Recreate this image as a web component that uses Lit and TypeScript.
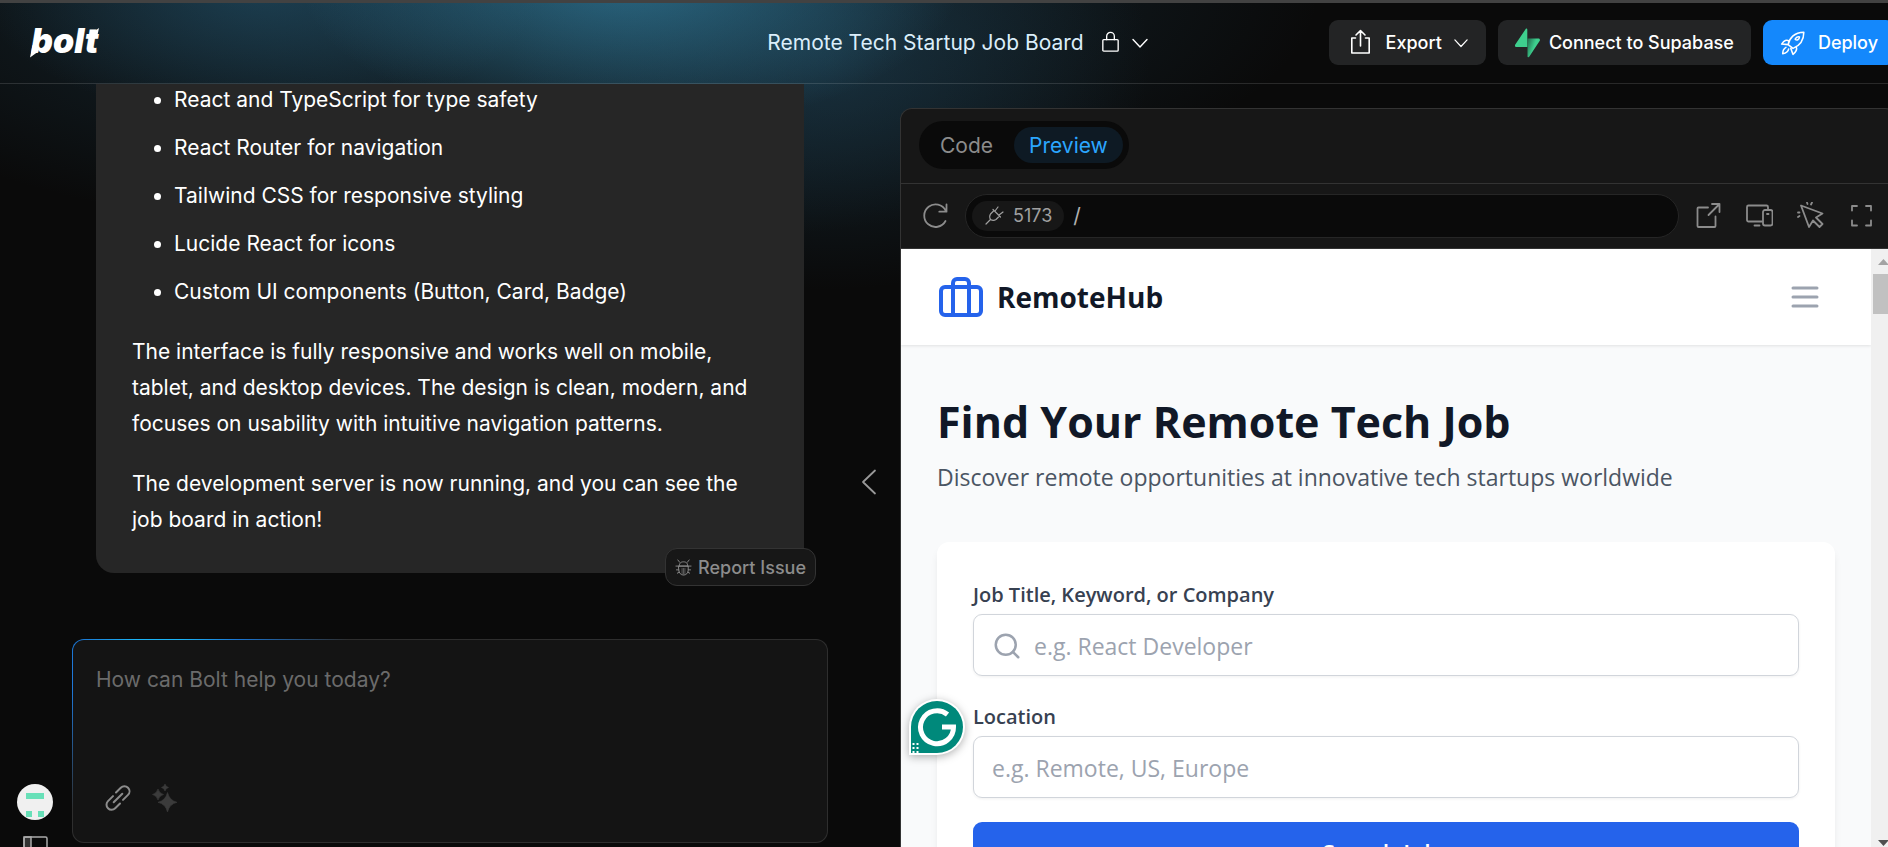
import { LitElement, html, css, svg } from "lit";
import { customElement } from "lit/decorators.js";

const FEATURES = [
  "React and TypeScript for type safety",
  "React Router for navigation",
  "Tailwind CSS for responsive styling",
  "Lucide React for icons",
  "Custom UI components (Button, Card, Badge)",
];

const icon = (size: number, box: number, width: number, body: unknown) => html`
  <svg width=${size} height=${size} viewBox="0 0 ${box} ${box}" fill="none" stroke="currentColor"
    stroke-width=${width} stroke-linecap="round" stroke-linejoin="round" aria-hidden="true">${body}</svg>`;

const chevron = (size: number) => icon(size, 16, 1.4, svg`<path d="M1 4.500 8 12l7-7.500"/>`);

@customElement("bolt-header")
class BoltHeader extends LitElement {
  static styles = css`
    :host {
      display: grid;
      grid-template-columns: 1fr auto 1fr;
      align-items: center;
      height: 79px;
      padding: 0 19px 1px 20px;
      border-top: 3px solid #424242;
      border-bottom: 1px solid rgba(255, 255, 255, 0.13);
      box-sizing: content-box;
    }
    .logo { display: block; overflow: visible; margin-left: 10px; }
    .word { font: italic 900 34px Inter, sans-serif; fill: #fff; }
    .title { display: flex; align-items: center; font-size: 21px; color: #dbeefa; }
    .title h1 { font: inherit; margin: 0 15px 0 0; }
    .title button {
      display: flex; align-items: center; gap: 10px; padding: 0;
      border: 0; background: none; color: #fff;
    }
    .actions { display: flex; justify-content: flex-end; gap: 12px; }
    .action {
      display: flex; align-items: center; height: 45px; padding: 0 17px; gap: 12px;
      border: 0; border-radius: 9px; background: #232425; color: #fff;
      font: 500 18px Inter, sans-serif; white-space: nowrap;
    }
    .export { padding: 0 18px; }
    .primary { background: #1488fc; }
    .supabase { gap: 9px; }
  `;
  render() {
    return html`
      <svg class="logo" width="70" height="36" viewBox="0 0 70 36" role="img" aria-label="bolt">
        <path d="M2.500 20 0 32.500 9 26zM60.500 9 69 3l-1.500 7z" fill="#fff" />
        <text class="word" x="1" y="28">bolt</text>
      </svg>
      <div class="title">
        <h1>Remote Tech Startup Job Board</h1>
        <button aria-label="Project visibility">
          ${icon(23, 24, 1.4, svg`<rect x="4" y="9" width="16" height="12" rx="1"/><path d="M8 9V5.500a4 4 0 0 1 8 0V9"/>`)}
          ${chevron(16)}
        </button>
      </div>
      <div class="actions">
        <button class="action export">
          ${icon(27, 27, 1.6, svg`<path d="M8.500 9H4.800v15h17.400V9h-3.700M13.500 17V1.500M9 6l4.500-4.500L18 6"/>`)}
          Export ${chevron(14)}
        </button>
        <button class="action supabase">
          <svg width="25" height="30" viewBox="0 0 25 30" aria-hidden="true">
            <defs><linearGradient id="g" x1="0" y1="0" x2="1" y2="0.500">
              <stop offset="0" stop-color="#1f6b4c"/><stop offset="0.600" stop-color="#3ecf8e"/>
            </linearGradient></defs>
            <path d="M12.500 10.500H23.400c1.500 0 2 1.500 1.200 2.500L14.200 28.800c-.6.8-1.700.4-1.700-.6z" fill="url(#g)"/>
            <path d="M12.300 19H1.400c-1.300 0-1.900-1.500-1.100-2.500L10.700 1c.6-.8 1.600-.4 1.600.6z" fill="#3ecf8e"/>
          </svg>
          Connect to Supabase
        </button>
        <button class="action primary">
          ${icon(26, 24, 1.4, svg`<path d="M7.500 13.500C8.500 8 13 2 22 2c0 7.500-4 12.500-10 15zM8.500 10.500C6 8.500 4 9.500 1.500 13l6 .5M15 15.500c1 2.500-.500 5-3 7l-2-5.500M14 8.500c1-2 2.500-2.500 4-2-.2 2.500-2.500 3.500-4 2zM5.500 16C3.500 17 2.500 19 2.500 22c2.500-.5 5-1.500 5.500-4.500"/>`)}
          Deploy
        </button>
      </div>`;
  }
}

@customElement("chat-column")
class ChatColumn extends LitElement {
  static styles = css`
    :host { display: flex; min-height: 0; overflow: hidden; font-size: 21px; }
    .rail {
      flex: none; width: 70px; box-sizing: border-box;
      display: flex; flex-direction: column; justify-content: flex-end; align-items: center; gap: 16px;
      margin: 0 2px -15px 0;
    }
    .rail button { display: block; border: 0; padding: 0; background: none; color: #aaa; }
    .rail svg { display: block; }
    .main { flex: 1; min-width: 0; display: flex; flex-direction: column; justify-content: flex-end; }
    .message {
      position: relative; margin: 0 24px 66px; padding: 0 36px 35px; border-radius: 0 0 18px 18px;
      background: #262626; color: #fff; line-height: 36px;
    }
    .message ul { margin: 0; padding: 0 0 0 42px; }
    .message li { margin-bottom: 12px; }
    .message li::marker { font-size: 21px; }
    .message p { margin: 24px 0 0; }
    .report {
      position: absolute; right: -12px; bottom: -13px; height: 38px;
      display: flex; align-items: center; gap: 6px; padding: 0 9px;
      border: 1px solid #333; border-radius: 12px; background: #171717; color: #8c8c8c;
      font: 500 18px Inter, sans-serif;
    }
    .composer {
      display: flex; flex-direction: column; justify-content: space-between; flex: none;
      height: 202px; margin-bottom: 4px; box-sizing: content-box;
      border: 1px solid transparent; border-radius: 12px;
      background:
        linear-gradient(#141414, #141414) padding-box,
        radial-gradient(ellipse 190px 30px at 86px 0, #1cb4f5 12%, #1a75d2 42%, transparent) border-box,
        radial-gradient(circle 170px at 0 0, #1f78d8 30%, transparent) border-box,
        linear-gradient(#2e2e2e, #2e2e2e) border-box;
    }
    .composer textarea {
      border: 0; outline: 0; resize: none; background: none; color: #fff; overflow: hidden;
      padding: 22px 23px; height: 80px; font: 21px/36px Inter, sans-serif;
    }
    .composer textarea::placeholder { color: #6b6b6b; opacity: 1; }
    .tools { display: flex; gap: 20px; padding: 0 31px 30px; }
    .tools button { padding: 0; border: 0; background: none; color: #8c8c8c; display: block; }
    .tools svg { display: block; }
    .tools .dim { color: #3b3b3b; }
    .gutter { flex: none; width: 72px; display: flex; align-items: center; justify-content: center; }
    .gutter button { padding: 0; border: 0; background: none; color: #999; margin: 36px 0 0 9px; display: block; }
  `;
  render() {
    return html`
      <nav class="rail" aria-label="Account">
        <button aria-label="Profile">
          <svg width="36" height="36" viewBox="0 0 36 36">
            <circle cx="18" cy="18" r="18" fill="#f0f0f0"/>
            <path d="M9 9h18v6H9zM9 27h6v6H9zM21 27h6v6h-6z" fill="#68e0b8"/>
          </svg>
        </button>
        <button aria-label="Toggle sidebar">
          <svg width="25" height="26" viewBox="0 0 25 26" fill="none" stroke="currentColor" stroke-width="1.500">
            <path d="M1 1h7v24H1z" fill="#333"/><rect x="1" y="1" width="23" height="24" rx="1.500"/>
          </svg>
        </button>
      </nav>
      <div class="main">
        <article class="message">
          <ul>${FEATURES.map((f) => html`<li>${f}</li>`)}</ul>
          <p>The interface is fully responsive and works well on mobile, tablet, and desktop devices. The design is clean, modern, and focuses on usability with intuitive navigation patterns.</p>
          <p>The development server is now running, and you can see the job board in action!</p>
          <button class="report">
            ${icon(17, 18, 1, svg`<path d="M4 7.500h10v4.500a5 5 0 0 1-10 0zM4.500 7.500C4.500 4 6.500 3 9 3s4.500 1 4.500 4.500M1 7.500h16M1.500 11.500H4M14 11.500h2.500M3 1 5 3.500M15 1 13 3.500M2.500 15l2-1M15.500 15l-2-1"/><path d="M9 10v6M7.500 10v5.500M10.500 10v5.500" opacity="0.600"/>`)}
            Report Issue
          </button>
        </article>
        <form class="composer">
          <textarea aria-label="Prompt" placeholder="How can Bolt help you today?"></textarea>
          <div class="tools">
            <button type="button" aria-label="Attach">
              ${icon(28, 28, 2, svg`<path d="M12 8.500 16.800 3.700a5 5 0 0 1 7.200 0c2 2 2 5.200 0 7.200l-5 5M16 19.500l-4.800 4.800a5 5 0 0 1-7.200 0c-2-2-2-5.200 0-7.200l5-5M9.700 18.300l8.600-8.600"/>`)}
            </button>
            <button class="dim" type="button" aria-label="Enhance prompt">
              <svg width="26" height="28" viewBox="0 0 26 28" fill="currentColor">
                <path d="M15.500 8.500q2 8 9.500 9.800-7.500 1.700-9.500 9.700-2-8-9.500-9.700 7.500-1.800 9.500-9.800zM6 5q1.200 4.300 5.500 5.500Q7.200 11.700 6 16q-1.200-4.300-5.500-5.500Q4.800 9.300 6 5zM13 0q.7 2.800 3.500 3.500Q13.700 4.200 13 7q-.7-2.800-3.500-3.500Q12.300 2.800 13 0z" stroke="currentColor" stroke-width="0.600" stroke-linejoin="round"/>
              </svg>
            </button>
          </div>
        </form>
      </div>
      <div class="gutter">
        <button aria-label="Hide chat">
          ${icon(26, 26, 1.8, svg`<path d="M19 1.500 7 13l12 11.500"/>`)}
        </button>
      </div>`;
  }
}

@customElement("remote-hub")
class RemoteHub extends LitElement {
  static styles = css`
    :host {
      flex: 1; min-height: 0; display: flex; overflow: hidden;
      background: #f9fafb; color: #111827; font: 24px/36px "Open Sans", "Noto Sans", sans-serif;
    }
    .page { flex: 1; min-width: 0; }
    .bar {
      display: flex; align-items: center; height: 96px; padding: 0 48px 0 36px; gap: 12px;
      background: #fff; box-shadow: 0 1px 3px rgba(0, 0, 0, 0.1);
    }
    .bar svg { display: block; }
    .brand { display: flex; align-items: center; gap: 12px; flex: 1; color: #111827; text-decoration: none; font-size: 28px; font-weight: 700; }
    .blue { color: #2563eb; display: block; }
    .menu { padding: 0; border: 0; background: none; color: #9ca3af; }
    .content { padding: 47px 36px 0; }
    h2 { margin: 0; font-size: 43px; line-height: 60px; font-weight: 700; }
    .lead { margin: 7px 0 47px; color: #4b5563; font-size: 23px; }
    .card {
      padding: 36px; height: 400px; background: #fff; border-radius: 12px;
      box-shadow: 0 6px 9px -2px rgba(0, 0, 0, 0.1);
    }
    label { display: block; height: 36px; line-height: 33px; font-size: 20px; font-weight: 600; color: #374151; }
    .field {
      display: flex; align-items: center; gap: 12px; height: 62px; box-sizing: border-box; padding: 1px 18px 0;
      margin-bottom: 24px; border: 1px solid #d1d5db; border-radius: 9px; color: #9ca3af;
      box-shadow: 0 1px 3px rgba(0, 0, 0, 0.06);
    }
    .field input { flex: 1; min-width: 0; padding: 0; border: 0; outline: 0; background: none; color: #111827; font: inherit; font-size: 23px; }
    .field input::placeholder { color: #9ca3af; opacity: 1; }
    .search { width: 100%; height: 62px; border: 0; border-radius: 9px; background: #2563eb; color: #fff; font: 600 23px "Open Sans", "Noto Sans", sans-serif; }
    .scroll { flex: none; width: 25px; background: #f0f0f0; display: flex; flex-direction: column; align-items: center; }
    .arrow { width: 11px; height: 6px; margin: 10px 0 9px; background: #a3a3a3; clip-path: polygon(50% 0, 100% 100%, 0 100%); }
    .thumb { width: 21px; height: 40px; background: #c1c1c1; }
    .down { margin: auto 0 1px; background: #505050; clip-path: polygon(0 0, 100% 0, 50% 100%); }
  `;
  render() {
    return html`
      <div class="page">
        <header class="bar">
          <a class="brand" href="#">
            <span class="blue">${icon(48, 24, 2, svg`<rect x="2" y="7" width="20" height="14" rx="2"/><path d="M16 21V5a2 2 0 0 0-2-2h-4a2 2 0 0 0-2 2v16"/>`)}</span>
            RemoteHub
          </a>
          <button class="menu" aria-label="Menu">${icon(36, 24, 2, svg`<path d="M4 6h16M4 12h16M4 18h16"/>`)}</button>
        </header>
        <div class="content">
          <h2>Find Your Remote Tech Job</h2>
          <p class="lead">Discover remote opportunities at innovative tech startups worldwide</p>
          <form class="card">
            <label for="kw">Job Title, Keyword, or Company</label>
            <div class="field">
              ${icon(30, 24, 2, svg`<circle cx="11" cy="11" r="8"/><path d="m21 21-4.300-4.300"/>`)}
              <input id="kw" placeholder="e.g. React Developer" />
            </div>
            <label for="loc">Location</label>
            <div class="field"><input id="loc" placeholder="e.g. Remote, US, Europe" /></div>
            <button class="search" type="button">Search Jobs</button>
          </form>
        </div>
      </div>
      <div class="scroll">
        <div class="arrow"></div><div class="thumb"></div><div class="arrow down"></div>
      </div>`;
  }
}

@customElement("preview-panel")
class PreviewPanel extends LitElement {
  static styles = css`
    :host {
      display: flex; flex-direction: column; min-width: 0; min-height: 0; margin: 24px 17px 0 0;
      border: 1px solid #333; border-bottom: 0; border-radius: 12px 12px 0 0; overflow: hidden; background: #171717;
    }
    .tabs { display: flex; align-items: center; height: 72px; padding: 0 18px 2px; border-bottom: 1px solid #333; }
    .group { display: flex; gap: 6px; padding: 6px; border-radius: 24px; background: #0a0a0a; }
    .tab {
      height: 36px; padding: 0 15px; border: 0; border-radius: 18px; background: none; color: #8c8c8c;
      font: 21px Inter, sans-serif;
    }
    .tab.on { background: #0e1a24; color: #2ba6ff; }
    .address { display: flex; align-items: center; height: 63px; padding: 0 21px 1px; border-bottom: 1px solid #333; color: #8c8c8c; }
    .address button { padding: 0; border: 0; background: none; color: inherit; display: block; }
    .address svg { display: block; }
    .url {
      display: flex; align-items: center; flex: 1; height: 44px; box-sizing: border-box; margin: 0 16px;
      padding: 0 6px; border: 1px solid #262626; border-radius: 22px; background: #0a0a0a; gap: 9px;
    }
    .url .port {
      display: flex; align-items: center; gap: 9px; height: 30px; padding: 0 12px 0 13px;
      border-radius: 15px; background: #171717; color: #a0a0a0; font: 18px Inter, sans-serif;
    }
    .url input { flex: 1; min-width: 0; border: 0; padding: 0; outline: 0; background: none; color: #b0b0b0; font: 21px Inter, sans-serif; }
    .icons { display: flex; gap: 24px; }
  `;
  render() {
    return html`
      <div class="tabs">
        <div class="group" role="tablist">
          <button class="tab" role="tab">Code</button>
          <button class="tab on" role="tab" aria-selected="true">Preview</button>
        </div>
      </div>
      <div class="address">
        <button aria-label="Reload">${icon(27, 27, 1.8, svg`<path d="M23.500 19A11.300 11.300 0 1 1 23.700 8.700M24.500 2.500v7.200h-7.200"/>`)}</button>
        <div class="url">
          <button class="port" aria-label="Port 5173">
            ${icon(19, 19, 1.2, svg`<path d="M1 18l4.500-4.500M8 3.500l7.500 7.500M9 4.500 5.500 8c-1 1.500-1 3.500 0 5.500 2 1.200 4 1 5.500 0l3.500-3.500M10 5l3-4M14 9l4-3"/>`)}
            <span>5173</span>
          </button>
          <input aria-label="Path" value="/" />
        </div>
        <div class="icons">
          <button aria-label="Open in new tab">${icon(27, 27, 1.8, svg`<path d="M13 5.500H3.500a1 1 0 0 0-1 1V24a1 1 0 0 0 1 1H19.500a1 1 0 0 0 1-1V14.500M13.500 13 24.500 2M17 2h7.500v8"/>`)}</button>
          <button aria-label="Device size">${icon(27, 27, 1.8, svg`<path d="M16 19.500H2.500A1.500 1.500 0 0 1 1 18V5a1.500 1.500 0 0 1 1.500-1.500h18A1.500 1.500 0 0 1 22 5v2M8.500 23.500h5"/><rect x="17" y="8" width="9.500" height="15.500" rx="2"/><path d="M21 12h1.500"/>`)}</button>
          <button aria-label="Inspect">${icon(27, 27, 1.8, svg`<path d="M4 3.500 25.500 11.500l-6.500 4 6.500 6.500-3 3-6.500-6.500-4 6.500zM10.500 2 10 .5M14 2.500l1-2M2.500 10.500H1M2.500 14 1 15"/>`)}</button>
          <button aria-label="Full screen">${icon(27, 27, 1.8, svg`<path d="M4 8.500V4h5M18 4h5v4.500M23 18.500v5h-5M9 23.500H4v-5"/>`)}</button>
        </div>
      </div>
      <remote-hub></remote-hub>`;
  }
}

@customElement("app-root")
class AppRoot extends LitElement {
  static styles = css`
    :host { display: block; position: relative; height: 100vh; overflow: hidden; background: #0a0a0a; font-family: Inter, sans-serif; }
    .shell {
      display: flex; flex-direction: column; width: calc(100% + 26px); height: 100%;
      background:
        radial-gradient(ellipse 330px 150px at 630px -20px, rgba(52, 135, 170, 0.62), transparent),
        radial-gradient(ellipse 280px 130px at 260px -10px, rgba(38, 95, 125, 0.45), transparent),
        radial-gradient(ellipse 320px 230px at 830px 60px, rgba(32, 70, 92, 0.45), transparent),
        radial-gradient(ellipse 780px 260px at 540px -10px, rgba(38, 85, 110, 0.5), transparent);
    }
    .body { flex: 1; min-height: 0; display: grid; grid-template-columns: 900px minmax(0, 1fr); grid-template-rows: minmax(0, 1fr); }
    .assistant {
      position: absolute; left: 909px; bottom: 91px; padding: 0; border: 0; background: none;
      filter: drop-shadow(0 2px 4px rgba(0, 0, 0, 0.3));
    }
    .assistant svg { display: block; }
  `;
  render() {
    return html`
      <div class="shell">
        <bolt-header></bolt-header>
        <div class="body">
          <chat-column></chat-column>
          <preview-panel></preview-panel>
        </div>
      </div>
      <button class="assistant" aria-label="Writing assistant">
        <svg width="58" height="58" viewBox="0 0 58 58">
          <path d="M0 57V29a28 28 0 1 1 28 28z" fill="#fff"/>
          <path d="M2 55V29a26 26 0 1 1 26 26z" fill="#00897b"/>
          <path d="M38.500 16.500a16.500 16.500 0 1 0 6 12.500H33" fill="none" stroke="#fff" stroke-width="5"/>
          <path d="M4.500 45v11M8.500 45v11" stroke="#fff" stroke-width="2" stroke-dasharray="2 2"/>
        </svg>
      </button>`;
  }
}
